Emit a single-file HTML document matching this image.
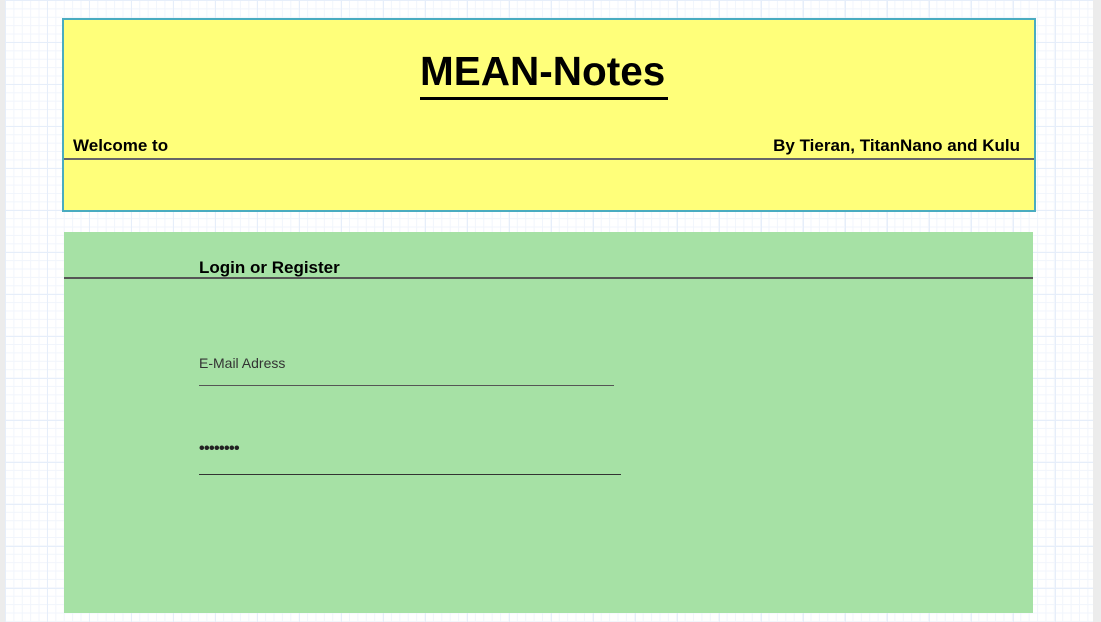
<!DOCTYPE html>
<html><head><style>
html,body{margin:0;padding:0}
body{width:1101px;height:622px;position:relative;overflow:hidden;font-family:"Liberation Sans",Arial,sans-serif;
background-color:#fff;
background-image:linear-gradient(#e6eefa 1px,transparent 1px),linear-gradient(90deg,#e6eefa 1px,transparent 1px),linear-gradient(#f1f5fc 1px,transparent 1px),linear-gradient(90deg,#f1f5fc 1px,transparent 1px);
background-size:42px 42px,42px 42px,8.4px 8.4px,8.4px 8.4px;background-position:5px 0}
.strip{position:absolute;top:0;bottom:0;background:#ececec}
.a{position:absolute}
</style></head><body>
<div class="strip" style="left:0;width:5px"></div>
<div class="strip" style="right:0;width:8px"></div>
<div class="a" style="left:62px;top:18px;width:970px;height:190px;background:#ffff7a;border:2px solid #4aacc0"></div>
<div class="a" style="left:420px;top:46px;font-size:40.5px;font-weight:bold;line-height:50px;color:#000">MEAN-Notes</div>
<div class="a" style="left:420px;top:97px;width:248px;height:3px;background:#000"></div>
<div class="a" style="left:73px;top:136px;font-size:17px;font-weight:bold">Welcome to</div>
<div class="a" style="right:81px;top:136px;font-size:17px;font-weight:bold">By Tieran, TitanNano and Kulu</div>
<div class="a" style="left:64px;top:158px;width:970px;height:2px;background:#666"></div>
<div class="a" style="left:64px;top:232px;width:969px;height:381px;background:#a6e1a5"></div>
<div class="a" style="left:199px;top:258px;font-size:17px;font-weight:bold">Login or Register</div>
<div class="a" style="left:64px;top:277px;width:969px;height:2px;background:#555"></div>
<div class="a" style="left:199px;top:355px;font-size:14px;color:#333">E-Mail Adress</div>
<div class="a" style="left:199px;top:385px;width:415px;height:1px;background:#555"></div>
<div class="a" style="left:199px;top:440px;font-size:16px;font-weight:bold;color:#222;letter-spacing:-0.6px">••••••••</div>
<div class="a" style="left:199px;top:474px;width:422px;height:1px;background:#333"></div>
</body></html>
